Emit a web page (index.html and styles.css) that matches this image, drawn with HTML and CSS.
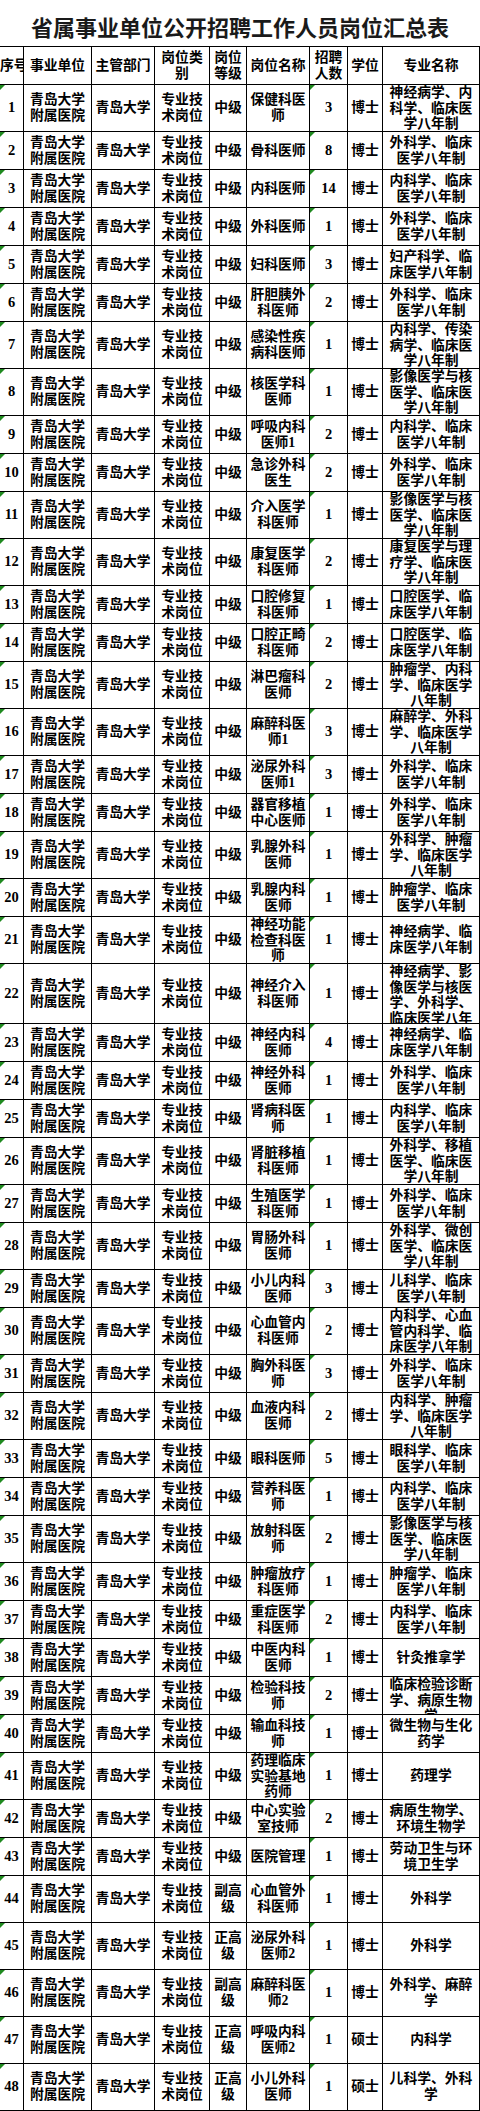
FILE: index.html
```html
<!DOCTYPE html>
<html lang="zh-CN">
<head>
<meta charset="utf-8">
<title>省属事业单位公开招聘工作人员岗位汇总表</title>
<link rel="stylesheet" href="styles.css">
</head>
<body>
<div class="sheet">
  <div class="title">省属事业单位公开招聘工作人员岗位汇总表</div>
  <div class="table">
    <div class="row head">
      <div class="c c1"><span>序号</span></div>
      <div class="c"><span>事业单位</span></div>
      <div class="c"><span>主管部门</span></div>
      <div class="c"><span>岗位类别</span></div>
      <div class="c"><span>岗位等级</span></div>
      <div class="c"><span>岗位名称</span></div>
      <div class="c"><span>招聘人数</span></div>
      <div class="c"><span>学位</span></div>
      <div class="c"><span>专业名称</span></div>
    </div>

    <div class="row t3"><div class="c c1 tri n"><span>1</span></div><div class="c"><span>青岛大学附属医院</span></div><div class="c"><span>青岛大学</span></div><div class="c"><span>专业技术岗位</span></div><div class="c"><span>中级</span></div><div class="c"><span>保健科医师</span></div><div class="c tri n"><span>3</span></div><div class="c"><span>博士</span></div><div class="c"><span>神经病学、内科学、临床医学八年制</span></div></div>
    <div class="row"><div class="c c1 tri n"><span>2</span></div><div class="c"><span>青岛大学附属医院</span></div><div class="c"><span>青岛大学</span></div><div class="c"><span>专业技术岗位</span></div><div class="c"><span>中级</span></div><div class="c"><span>骨科医师</span></div><div class="c tri n"><span>8</span></div><div class="c"><span>博士</span></div><div class="c"><span>外科学、临床医学八年制</span></div></div>
    <div class="row"><div class="c c1 tri n"><span>3</span></div><div class="c"><span>青岛大学附属医院</span></div><div class="c"><span>青岛大学</span></div><div class="c"><span>专业技术岗位</span></div><div class="c"><span>中级</span></div><div class="c"><span>内科医师</span></div><div class="c tri n"><span>14</span></div><div class="c"><span>博士</span></div><div class="c"><span>内科学、临床医学八年制</span></div></div>
    <div class="row"><div class="c c1 tri n"><span>4</span></div><div class="c"><span>青岛大学附属医院</span></div><div class="c"><span>青岛大学</span></div><div class="c"><span>专业技术岗位</span></div><div class="c"><span>中级</span></div><div class="c"><span>外科医师</span></div><div class="c tri n"><span>1</span></div><div class="c"><span>博士</span></div><div class="c"><span>外科学、临床医学八年制</span></div></div>
    <div class="row"><div class="c c1 tri n"><span>5</span></div><div class="c"><span>青岛大学附属医院</span></div><div class="c"><span>青岛大学</span></div><div class="c"><span>专业技术岗位</span></div><div class="c"><span>中级</span></div><div class="c"><span>妇科医师</span></div><div class="c tri n"><span>3</span></div><div class="c"><span>博士</span></div><div class="c"><span>妇产科学、临床医学八年制</span></div></div>
    <div class="row"><div class="c c1 tri n"><span>6</span></div><div class="c"><span>青岛大学附属医院</span></div><div class="c"><span>青岛大学</span></div><div class="c"><span>专业技术岗位</span></div><div class="c"><span>中级</span></div><div class="c"><span>肝胆胰外科医师</span></div><div class="c tri n"><span>2</span></div><div class="c"><span>博士</span></div><div class="c"><span>外科学、临床医学八年制</span></div></div>
    <div class="row t3"><div class="c c1 tri n"><span>7</span></div><div class="c"><span>青岛大学附属医院</span></div><div class="c"><span>青岛大学</span></div><div class="c"><span>专业技术岗位</span></div><div class="c"><span>中级</span></div><div class="c"><span>感染性疾病科医师</span></div><div class="c tri n"><span>1</span></div><div class="c"><span>博士</span></div><div class="c"><span>内科学、传染病学、临床医学八年制</span></div></div>
    <div class="row t3"><div class="c c1 tri n"><span>8</span></div><div class="c"><span>青岛大学附属医院</span></div><div class="c"><span>青岛大学</span></div><div class="c"><span>专业技术岗位</span></div><div class="c"><span>中级</span></div><div class="c"><span>核医学科医师</span></div><div class="c tri n"><span>1</span></div><div class="c"><span>博士</span></div><div class="c"><span>影像医学与核医学、临床医学八年制</span></div></div>
    <div class="row"><div class="c c1 tri n"><span>9</span></div><div class="c"><span>青岛大学附属医院</span></div><div class="c"><span>青岛大学</span></div><div class="c"><span>专业技术岗位</span></div><div class="c"><span>中级</span></div><div class="c"><span>呼吸内科医师1</span></div><div class="c tri n"><span>2</span></div><div class="c"><span>博士</span></div><div class="c"><span>内科学、临床医学八年制</span></div></div>
    <div class="row"><div class="c c1 tri n"><span>10</span></div><div class="c"><span>青岛大学附属医院</span></div><div class="c"><span>青岛大学</span></div><div class="c"><span>专业技术岗位</span></div><div class="c"><span>中级</span></div><div class="c"><span>急诊外科医生</span></div><div class="c tri n"><span>2</span></div><div class="c"><span>博士</span></div><div class="c"><span>外科学、临床医学八年制</span></div></div>
    <div class="row t3"><div class="c c1 tri n"><span>11</span></div><div class="c"><span>青岛大学附属医院</span></div><div class="c"><span>青岛大学</span></div><div class="c"><span>专业技术岗位</span></div><div class="c"><span>中级</span></div><div class="c"><span>介入医学科医师</span></div><div class="c tri n"><span>1</span></div><div class="c"><span>博士</span></div><div class="c"><span>影像医学与核医学、临床医学八年制</span></div></div>
    <div class="row t3"><div class="c c1 tri n"><span>12</span></div><div class="c"><span>青岛大学附属医院</span></div><div class="c"><span>青岛大学</span></div><div class="c"><span>专业技术岗位</span></div><div class="c"><span>中级</span></div><div class="c"><span>康复医学科医师</span></div><div class="c tri n"><span>2</span></div><div class="c"><span>博士</span></div><div class="c"><span>康复医学与理疗学、临床医学八年制</span></div></div>
    <div class="row"><div class="c c1 tri n"><span>13</span></div><div class="c"><span>青岛大学附属医院</span></div><div class="c"><span>青岛大学</span></div><div class="c"><span>专业技术岗位</span></div><div class="c"><span>中级</span></div><div class="c"><span>口腔修复科医师</span></div><div class="c tri n"><span>1</span></div><div class="c"><span>博士</span></div><div class="c"><span>口腔医学、临床医学八年制</span></div></div>
    <div class="row"><div class="c c1 tri n"><span>14</span></div><div class="c"><span>青岛大学附属医院</span></div><div class="c"><span>青岛大学</span></div><div class="c"><span>专业技术岗位</span></div><div class="c"><span>中级</span></div><div class="c"><span>口腔正畸科医师</span></div><div class="c tri n"><span>2</span></div><div class="c"><span>博士</span></div><div class="c"><span>口腔医学、临床医学八年制</span></div></div>
    <div class="row t3"><div class="c c1 tri n"><span>15</span></div><div class="c"><span>青岛大学附属医院</span></div><div class="c"><span>青岛大学</span></div><div class="c"><span>专业技术岗位</span></div><div class="c"><span>中级</span></div><div class="c"><span>淋巴瘤科医师</span></div><div class="c tri n"><span>2</span></div><div class="c"><span>博士</span></div><div class="c"><span>肿瘤学、内科学、临床医学八年制</span></div></div>
    <div class="row t3"><div class="c c1 tri n"><span>16</span></div><div class="c"><span>青岛大学附属医院</span></div><div class="c"><span>青岛大学</span></div><div class="c"><span>专业技术岗位</span></div><div class="c"><span>中级</span></div><div class="c"><span>麻醉科医师1</span></div><div class="c tri n"><span>3</span></div><div class="c"><span>博士</span></div><div class="c"><span>麻醉学、外科学、临床医学八年制</span></div></div>
    <div class="row"><div class="c c1 tri n"><span>17</span></div><div class="c"><span>青岛大学附属医院</span></div><div class="c"><span>青岛大学</span></div><div class="c"><span>专业技术岗位</span></div><div class="c"><span>中级</span></div><div class="c"><span>泌尿外科医师1</span></div><div class="c tri n"><span>3</span></div><div class="c"><span>博士</span></div><div class="c"><span>外科学、临床医学八年制</span></div></div>
    <div class="row"><div class="c c1 tri n"><span>18</span></div><div class="c"><span>青岛大学附属医院</span></div><div class="c"><span>青岛大学</span></div><div class="c"><span>专业技术岗位</span></div><div class="c"><span>中级</span></div><div class="c"><span>器官移植中心医师</span></div><div class="c tri n"><span>1</span></div><div class="c"><span>博士</span></div><div class="c"><span>外科学、临床医学八年制</span></div></div>
    <div class="row t3"><div class="c c1 tri n"><span>19</span></div><div class="c"><span>青岛大学附属医院</span></div><div class="c"><span>青岛大学</span></div><div class="c"><span>专业技术岗位</span></div><div class="c"><span>中级</span></div><div class="c"><span>乳腺外科医师</span></div><div class="c tri n"><span>1</span></div><div class="c"><span>博士</span></div><div class="c"><span>外科学、肿瘤学、临床医学八年制</span></div></div>
    <div class="row"><div class="c c1 tri n"><span>20</span></div><div class="c"><span>青岛大学附属医院</span></div><div class="c"><span>青岛大学</span></div><div class="c"><span>专业技术岗位</span></div><div class="c"><span>中级</span></div><div class="c"><span>乳腺内科医师</span></div><div class="c tri n"><span>1</span></div><div class="c"><span>博士</span></div><div class="c"><span>肿瘤学、临床医学八年制</span></div></div>
    <div class="row t3"><div class="c c1 tri n"><span>21</span></div><div class="c"><span>青岛大学附属医院</span></div><div class="c"><span>青岛大学</span></div><div class="c"><span>专业技术岗位</span></div><div class="c"><span>中级</span></div><div class="c"><span>神经功能检查科医师</span></div><div class="c tri n"><span>1</span></div><div class="c"><span>博士</span></div><div class="c"><span>神经病学、临床医学八年制</span></div></div>
    <div class="row t4"><div class="c c1 tri n"><span>22</span></div><div class="c"><span>青岛大学附属医院</span></div><div class="c"><span>青岛大学</span></div><div class="c"><span>专业技术岗位</span></div><div class="c"><span>中级</span></div><div class="c"><span>神经介入科医师</span></div><div class="c tri n"><span>1</span></div><div class="c"><span>博士</span></div><div class="c"><span>神经病学、影像医学与核医学、外科学、临床医学八年制</span></div></div>
    <div class="row"><div class="c c1 tri n"><span>23</span></div><div class="c"><span>青岛大学附属医院</span></div><div class="c"><span>青岛大学</span></div><div class="c"><span>专业技术岗位</span></div><div class="c"><span>中级</span></div><div class="c"><span>神经内科医师</span></div><div class="c tri n"><span>4</span></div><div class="c"><span>博士</span></div><div class="c"><span>神经病学、临床医学八年制</span></div></div>
    <div class="row"><div class="c c1 tri n"><span>24</span></div><div class="c"><span>青岛大学附属医院</span></div><div class="c"><span>青岛大学</span></div><div class="c"><span>专业技术岗位</span></div><div class="c"><span>中级</span></div><div class="c"><span>神经外科医师</span></div><div class="c tri n"><span>1</span></div><div class="c"><span>博士</span></div><div class="c"><span>外科学、临床医学八年制</span></div></div>
    <div class="row"><div class="c c1 tri n"><span>25</span></div><div class="c"><span>青岛大学附属医院</span></div><div class="c"><span>青岛大学</span></div><div class="c"><span>专业技术岗位</span></div><div class="c"><span>中级</span></div><div class="c"><span>肾病科医师</span></div><div class="c tri n"><span>1</span></div><div class="c"><span>博士</span></div><div class="c"><span>内科学、临床医学八年制</span></div></div>
    <div class="row t3"><div class="c c1 tri n"><span>26</span></div><div class="c"><span>青岛大学附属医院</span></div><div class="c"><span>青岛大学</span></div><div class="c"><span>专业技术岗位</span></div><div class="c"><span>中级</span></div><div class="c"><span>肾脏移植科医师</span></div><div class="c tri n"><span>1</span></div><div class="c"><span>博士</span></div><div class="c"><span>外科学、移植医学、临床医学八年制</span></div></div>
    <div class="row"><div class="c c1 tri n"><span>27</span></div><div class="c"><span>青岛大学附属医院</span></div><div class="c"><span>青岛大学</span></div><div class="c"><span>专业技术岗位</span></div><div class="c"><span>中级</span></div><div class="c"><span>生殖医学科医师</span></div><div class="c tri n"><span>1</span></div><div class="c"><span>博士</span></div><div class="c"><span>外科学、临床医学八年制</span></div></div>
    <div class="row t3"><div class="c c1 tri n"><span>28</span></div><div class="c"><span>青岛大学附属医院</span></div><div class="c"><span>青岛大学</span></div><div class="c"><span>专业技术岗位</span></div><div class="c"><span>中级</span></div><div class="c"><span>胃肠外科医师</span></div><div class="c tri n"><span>1</span></div><div class="c"><span>博士</span></div><div class="c"><span>外科学、微创医学、临床医学八年制</span></div></div>
    <div class="row"><div class="c c1 tri n"><span>29</span></div><div class="c"><span>青岛大学附属医院</span></div><div class="c"><span>青岛大学</span></div><div class="c"><span>专业技术岗位</span></div><div class="c"><span>中级</span></div><div class="c"><span>小儿内科医师</span></div><div class="c tri n"><span>3</span></div><div class="c"><span>博士</span></div><div class="c"><span>儿科学、临床医学八年制</span></div></div>
    <div class="row t3"><div class="c c1 tri n"><span>30</span></div><div class="c"><span>青岛大学附属医院</span></div><div class="c"><span>青岛大学</span></div><div class="c"><span>专业技术岗位</span></div><div class="c"><span>中级</span></div><div class="c"><span>心血管内科医师</span></div><div class="c tri n"><span>2</span></div><div class="c"><span>博士</span></div><div class="c"><span>内科学、心血管内科学、临床医学八年制</span></div></div>
    <div class="row"><div class="c c1 tri n"><span>31</span></div><div class="c"><span>青岛大学附属医院</span></div><div class="c"><span>青岛大学</span></div><div class="c"><span>专业技术岗位</span></div><div class="c"><span>中级</span></div><div class="c"><span>胸外科医师</span></div><div class="c tri n"><span>3</span></div><div class="c"><span>博士</span></div><div class="c"><span>外科学、临床医学八年制</span></div></div>
    <div class="row t3"><div class="c c1 tri n"><span>32</span></div><div class="c"><span>青岛大学附属医院</span></div><div class="c"><span>青岛大学</span></div><div class="c"><span>专业技术岗位</span></div><div class="c"><span>中级</span></div><div class="c"><span>血液内科医师</span></div><div class="c tri n"><span>2</span></div><div class="c"><span>博士</span></div><div class="c"><span>内科学、肿瘤学、临床医学八年制</span></div></div>
    <div class="row"><div class="c c1 tri n"><span>33</span></div><div class="c"><span>青岛大学附属医院</span></div><div class="c"><span>青岛大学</span></div><div class="c"><span>专业技术岗位</span></div><div class="c"><span>中级</span></div><div class="c"><span>眼科医师</span></div><div class="c tri n"><span>5</span></div><div class="c"><span>博士</span></div><div class="c"><span>眼科学、临床医学八年制</span></div></div>
    <div class="row"><div class="c c1 tri n"><span>34</span></div><div class="c"><span>青岛大学附属医院</span></div><div class="c"><span>青岛大学</span></div><div class="c"><span>专业技术岗位</span></div><div class="c"><span>中级</span></div><div class="c"><span>营养科医师</span></div><div class="c tri n"><span>1</span></div><div class="c"><span>博士</span></div><div class="c"><span>内科学、临床医学八年制</span></div></div>
    <div class="row t3"><div class="c c1 tri n"><span>35</span></div><div class="c"><span>青岛大学附属医院</span></div><div class="c"><span>青岛大学</span></div><div class="c"><span>专业技术岗位</span></div><div class="c"><span>中级</span></div><div class="c"><span>放射科医师</span></div><div class="c tri n"><span>2</span></div><div class="c"><span>博士</span></div><div class="c"><span>影像医学与核医学、临床医学八年制</span></div></div>
    <div class="row"><div class="c c1 tri n"><span>36</span></div><div class="c"><span>青岛大学附属医院</span></div><div class="c"><span>青岛大学</span></div><div class="c"><span>专业技术岗位</span></div><div class="c"><span>中级</span></div><div class="c"><span>肿瘤放疗科医师</span></div><div class="c tri n"><span>1</span></div><div class="c"><span>博士</span></div><div class="c"><span>肿瘤学、临床医学八年制</span></div></div>
    <div class="row"><div class="c c1 tri n"><span>37</span></div><div class="c"><span>青岛大学附属医院</span></div><div class="c"><span>青岛大学</span></div><div class="c"><span>专业技术岗位</span></div><div class="c"><span>中级</span></div><div class="c"><span>重症医学科医师</span></div><div class="c tri n"><span>2</span></div><div class="c"><span>博士</span></div><div class="c"><span>内科学、临床医学八年制</span></div></div>
    <div class="row"><div class="c c1 tri n"><span>38</span></div><div class="c"><span>青岛大学附属医院</span></div><div class="c"><span>青岛大学</span></div><div class="c"><span>专业技术岗位</span></div><div class="c"><span>中级</span></div><div class="c"><span>中医内科医师</span></div><div class="c tri n"><span>1</span></div><div class="c"><span>博士</span></div><div class="c"><span>针灸推拿学</span></div></div>
    <div class="row"><div class="c c1 tri n"><span>39</span></div><div class="c"><span>青岛大学附属医院</span></div><div class="c"><span>青岛大学</span></div><div class="c"><span>专业技术岗位</span></div><div class="c"><span>中级</span></div><div class="c"><span>检验科技师</span></div><div class="c tri n"><span>2</span></div><div class="c"><span>博士</span></div><div class="c"><span>临床检验诊断学、病原生物学</span></div></div>
    <div class="row"><div class="c c1 tri n"><span>40</span></div><div class="c"><span>青岛大学附属医院</span></div><div class="c"><span>青岛大学</span></div><div class="c"><span>专业技术岗位</span></div><div class="c"><span>中级</span></div><div class="c"><span>输血科技师</span></div><div class="c tri n"><span>1</span></div><div class="c"><span>博士</span></div><div class="c"><span>微生物与生化药学</span></div></div>
    <div class="row t3"><div class="c c1 tri n"><span>41</span></div><div class="c"><span>青岛大学附属医院</span></div><div class="c"><span>青岛大学</span></div><div class="c"><span>专业技术岗位</span></div><div class="c"><span>中级</span></div><div class="c"><span>药理临床实验基地药师</span></div><div class="c tri n"><span>1</span></div><div class="c"><span>博士</span></div><div class="c"><span>药理学</span></div></div>
    <div class="row"><div class="c c1 tri n"><span>42</span></div><div class="c"><span>青岛大学附属医院</span></div><div class="c"><span>青岛大学</span></div><div class="c"><span>专业技术岗位</span></div><div class="c"><span>中级</span></div><div class="c"><span>中心实验室技师</span></div><div class="c tri n"><span>2</span></div><div class="c"><span>博士</span></div><div class="c"><span>病原生物学、环境生物学</span></div></div>
    <div class="row"><div class="c c1 tri n"><span>43</span></div><div class="c"><span>青岛大学附属医院</span></div><div class="c"><span>青岛大学</span></div><div class="c"><span>专业技术岗位</span></div><div class="c"><span>中级</span></div><div class="c"><span>医院管理</span></div><div class="c tri n"><span>1</span></div><div class="c"><span>博士</span></div><div class="c"><span>劳动卫生与环境卫生学</span></div></div>
    <div class="row t3"><div class="c c1 tri n"><span>44</span></div><div class="c"><span>青岛大学附属医院</span></div><div class="c"><span>青岛大学</span></div><div class="c"><span>专业技术岗位</span></div><div class="c"><span>副高级</span></div><div class="c"><span>心血管外科医师</span></div><div class="c tri n"><span>1</span></div><div class="c"><span>博士</span></div><div class="c"><span>外科学</span></div></div>
    <div class="row t3"><div class="c c1 tri n"><span>45</span></div><div class="c"><span>青岛大学附属医院</span></div><div class="c"><span>青岛大学</span></div><div class="c"><span>专业技术岗位</span></div><div class="c"><span>正高级</span></div><div class="c"><span>泌尿外科医师2</span></div><div class="c tri n"><span>1</span></div><div class="c"><span>博士</span></div><div class="c"><span>外科学</span></div></div>
    <div class="row t3"><div class="c c1 tri n"><span>46</span></div><div class="c"><span>青岛大学附属医院</span></div><div class="c"><span>青岛大学</span></div><div class="c"><span>专业技术岗位</span></div><div class="c"><span>副高级</span></div><div class="c"><span>麻醉科医师2</span></div><div class="c tri n"><span>1</span></div><div class="c"><span>博士</span></div><div class="c"><span>外科学、麻醉学</span></div></div>
    <div class="row t3"><div class="c c1 tri n"><span>47</span></div><div class="c"><span>青岛大学附属医院</span></div><div class="c"><span>青岛大学</span></div><div class="c"><span>专业技术岗位</span></div><div class="c"><span>正高级</span></div><div class="c"><span>呼吸内科医师2</span></div><div class="c tri n"><span>1</span></div><div class="c"><span>硕士</span></div><div class="c"><span>内科学</span></div></div>
    <div class="row t3"><div class="c c1 tri n"><span>48</span></div><div class="c"><span>青岛大学附属医院</span></div><div class="c"><span>青岛大学</span></div><div class="c"><span>专业技术岗位</span></div><div class="c"><span>正高级</span></div><div class="c"><span>小儿外科医师</span></div><div class="c tri n"><span>1</span></div><div class="c"><span>硕士</span></div><div class="c"><span>儿科学、外科学</span></div></div>
  </div>
</div>
</body>
</html>
```

FILE: styles.css
```css
html, body {
  margin: 0;
  padding: 0;
  background: #ffffff;
}

.sheet {
  width: 480px;
  overflow: hidden;
  color: #000;
  font-family: "Liberation Serif", "Noto Sans CJK SC", serif;
  font-weight: bold;
}

.title {
  height: 46px;
  box-sizing: border-box;
  padding-top: 15px;
  text-align: center;
  font-family: "Noto Sans CJK SC", sans-serif;
  font-size: 22px;
  line-height: 22px;
  color: #1a1a1a;
}

.table {
  border-top: 1px solid #000;
  font-size: 13.8px;
  line-height: 15.6px;
}

.row {
  display: grid;
  grid-template-columns: 24px 68px 63px 55px 37px 63px 38px 35px 97px;
  height: 38px;
}

.row.t3 { height: 47px; }
.row.t4 { height: 60px; }

.c {
  position: relative;
  display: flex;
  flex-direction: column;
  box-sizing: border-box;
  overflow: hidden;
  border-right: 1px solid #000;
  border-bottom: 1px solid #000;
  padding: 0 2px;
}

.c > span {
  margin: auto 0;
  text-align: center;
}

.c1 {
  padding: 0;
}

.c1 > span {
  white-space: nowrap;
}

.n {
  font-size: 14.5px;
}

.tri::before {
  content: "";
  position: absolute;
  left: 0;
  top: 0;
  border-top: 5px solid #1f8a1f;
  border-right: 5px solid transparent;
}
```
